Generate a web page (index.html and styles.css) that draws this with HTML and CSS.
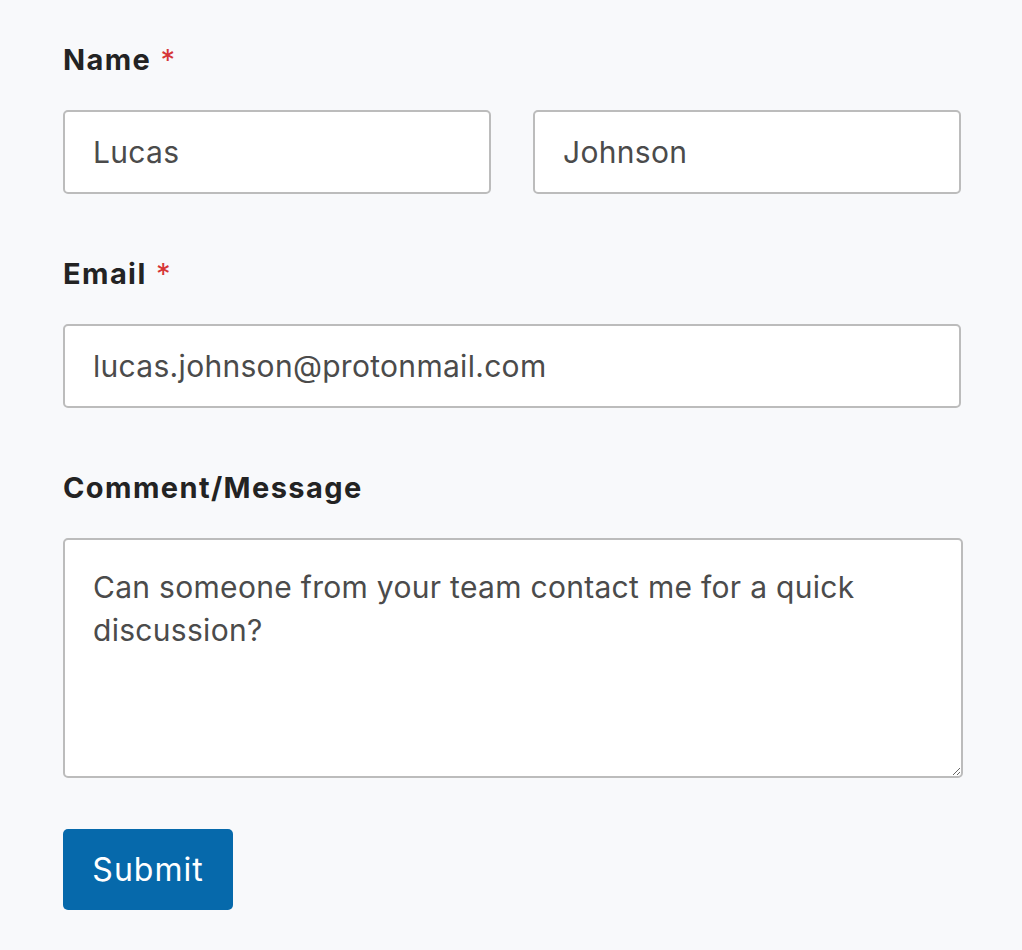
FILE: index.html
```html
<!DOCTYPE html>
<html lang="en">
<head>
<meta charset="utf-8">
<title>Contact Form</title>
<link rel="stylesheet" href="styles.css">
</head>
<body>
<form class="form">
  <div class="field">
    <label class="label">Name <span class="req">*</span></label>
    <div class="row">
      <input class="input" type="text" value="Lucas">
      <input class="input" type="text" value="Johnson">
    </div>
  </div>
  <div class="field">
    <label class="label">Email <span class="req">*</span></label>
    <input class="input input-full" type="email" value="lucas.johnson@protonmail.com">
  </div>
  <div class="field">
    <label class="label">Comment/Message</label>
    <textarea class="textarea">Can someone from your team contact me for a quick discussion?</textarea>
  </div>
  <button class="submit" type="button">Submit</button>
</form>
</body>
</html>
```

FILE: styles.css
```css
html, body {
  margin: 0;
  padding: 0;
  background: #f8f9fb;
}
body {
  font-family: Inter, "Noto Sans", "Liberation Sans", sans-serif;
  color: #222;
}
.form {
  width: 900px;
  padding: 42px 0 0 63px;
  display: flex;
  flex-direction: column;
}
.field {
  display: flex;
  flex-direction: column;
  margin-bottom: 62px;
}
.field:last-of-type {
  margin-bottom: 51px;
}
.label {
  font-size: 29px;
  line-height: 36px;
  font-weight: 700;
  letter-spacing: 1.4px;
  color: #232323;
  margin-bottom: 32px;
}
.req {
  color: #d63637;
  font-weight: 400;
  letter-spacing: 0;
  margin-left: 1px;
}
.row {
  display: flex;
  gap: 42px;
  width: 898px;
}
.input {
  box-sizing: border-box;
  height: 84px;
  width: 428px;
  border: 2px solid #bcbcbc;
  border-radius: 5px;
  background: #fff;
  padding: 0 28px;
  font-family: Inter, "Noto Sans", "Liberation Sans", sans-serif;
  font-size: 30px;
  letter-spacing: 0.3px;
  color: #4b4b4b;
  outline: none;
  margin: 0;
}
.input-full {
  width: 898px;
}
.textarea {
  box-sizing: border-box;
  width: 900px;
  height: 240px;
  border: 2px solid #bcbcbc;
  border-radius: 5px;
  background: #fff;
  padding: 26px 28px;
  font-family: Inter, "Noto Sans", "Liberation Sans", sans-serif;
  font-size: 30px;
  line-height: 43px;
  letter-spacing: 0.3px;
  color: #4b4b4b;
  outline: none;
  margin: 0;
  resize: vertical;
}
.submit {
  align-self: flex-start;
  box-sizing: border-box;
  height: 81px;
  width: 170px;
  border: none;
  border-radius: 5px;
  background: #0669ab;
  color: #fff;
  font-family: Inter, "Noto Sans", "Liberation Sans", sans-serif;
  font-size: 32px;
  letter-spacing: 1px;
  padding: 0;
  cursor: pointer;
}
```
